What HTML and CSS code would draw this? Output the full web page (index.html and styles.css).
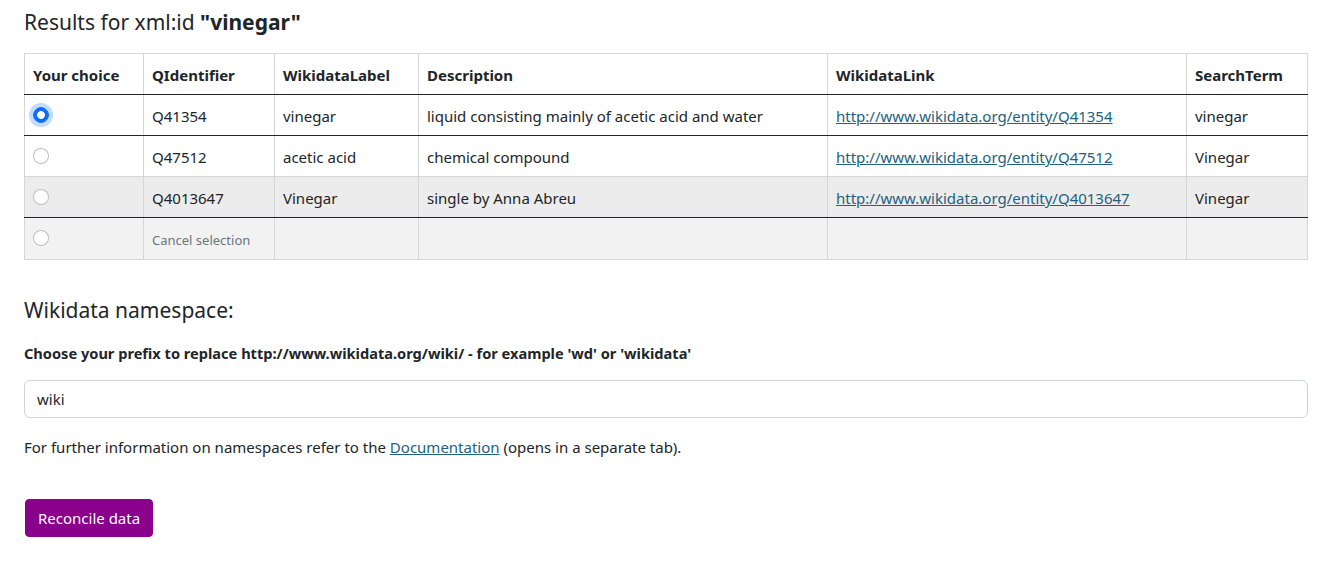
FILE: index.html
```html
<!DOCTYPE html>
<html lang="en">
<head>
<meta charset="utf-8">
<title>Results</title>
<link rel="stylesheet" href="styles.css">
</head>
<body>
<main class="page">
  <h4 class="title">Results for xml:id <strong>"vinegar"</strong></h4>
  <table class="results">
    <colgroup>
      <col class="c-choice"><col class="c-qid"><col class="c-label"><col class="c-desc"><col class="c-link"><col class="c-term">
    </colgroup>
    <thead>
      <tr class="dark-bottom">
        <th>Your choice</th><th>QIdentifier</th><th>WikidataLabel</th><th>Description</th><th>WikidataLink</th><th>SearchTerm</th>
      </tr>
    </thead>
    <tbody>
      <tr class="dark-bottom">
        <td><input type="radio" name="choice" class="radio" checked></td>
        <td>Q41354</td><td>vinegar</td><td>liquid consisting mainly of acetic acid and water</td>
        <td><a href="#">http://www.wikidata.org/entity/Q41354</a></td><td>vinegar</td>
      </tr>
      <tr>
        <td><input type="radio" name="choice" class="radio"></td>
        <td>Q47512</td><td>acetic acid</td><td>chemical compound</td>
        <td><a href="#">http://www.wikidata.org/entity/Q47512</a></td><td>Vinegar</td>
      </tr>
      <tr class="dark-bottom row-hover">
        <td><input type="radio" name="choice" class="radio"></td>
        <td>Q4013647</td><td>Vinegar</td><td>single by Anna Abreu</td>
        <td><a href="#">http://www.wikidata.org/entity/Q4013647</a></td><td>Vinegar</td>
      </tr>
      <tr class="row-cancel">
        <td><input type="radio" name="choice" class="radio"></td>
        <td><small class="muted">Cancel selection</small></td><td></td><td></td><td></td><td></td>
      </tr>
    </tbody>
  </table>

  <h5 class="subtitle">Wikidata namespace:</h5>
  <label class="form-label" for="prefix">Choose your prefix to replace http://www.wikidata.org/wiki/ - for example 'wd' or 'wikidata'</label>
  <input id="prefix" class="form-control" type="text" value="wiki">
  <p class="note">For further information on namespaces refer to the <a href="#">Documentation</a> (opens in a separate tab).</p>
  <button class="btn" type="button">Reconcile data</button>
</main>
</body>
</html>
```

FILE: styles.css
```css
html, body {
  margin: 0;
  padding: 0;
  background: #fff;
}
body {
  font-family: "Noto Sans", "Open Sans", sans-serif;
  font-size: 15px;
  line-height: 24px;
  color: #212529;
}
.page {
  padding: 0 17px 0 24px;
  display: flex;
  flex-direction: column;
  align-items: stretch;
}
.title {
  font-size: 21px;
  font-weight: 400;
  line-height: 28px;
  margin: 8px 0 17px;
}
.title strong { font-weight: 700; }

.results {
  width: 100%;
  table-layout: fixed;
  border-collapse: collapse;
  border: 1px solid #d6d6d6;
}
.c-choice { width: 119px; }
.c-qid { width: 131px; }
.c-label { width: 144px; }
.c-desc { width: 409px; }
.c-link { width: 359px; }
.c-term { width: 121px; }

.results th, .results td {
  padding: 8px;
  text-align: left;
  vertical-align: top;
  border-right: 1px solid #d6d6d6;
  border-bottom: 1px solid #d6d6d6;
  white-space: nowrap;
  height: 24px;
}
.results td { padding-top: 9px; padding-bottom: 7px; }
.results th { font-weight: 700; padding-top: 9px; padding-bottom: 7px; }
.results tr.dark-bottom > th,
.results tr.dark-bottom > td { border-bottom: 1px solid #212529; }
.row-hover > td { background: #ececec; }
.row-cancel > td { background: #f2f2f2; }

.radio {
  -webkit-appearance: none;
  appearance: none;
  box-sizing: border-box;
  width: 16px;
  height: 16px;
  margin: 3px 0 0 0;
  vertical-align: top;
  border: 1px solid rgba(0,0,0,.25);
  border-radius: 50%;
  background: #fff;
}
.radio:checked {
  background: radial-gradient(circle, #fff 0 3.6px, #0d6efd 4.2px);
  border-color: #0d6efd;
  box-shadow: 0 0 0 4px rgba(13,110,253,.25);
}

a { color: #22627f; text-decoration: underline; }
.muted { color: #6c757d; font-size: 13px; }

.subtitle {
  font-size: 21px;
  font-weight: 400;
  line-height: 24px;
  margin: 38px 0 19px;
}
.form-label {
  display: block;
  font-weight: 700;
  font-size: 14.6px;
  line-height: 24px;
  margin-bottom: 15px;
}
.form-control {
  box-sizing: border-box;
  width: 100%;
  height: 38px;
  padding: 6px 12px;
  font: inherit;
  color: #212529;
  border: 1px solid #ced4da;
  border-radius: 6px;
  margin: 0;
}
.note {
  margin: 17px 0 40px;
  font-size: 15px;
}
.btn {
  align-self: flex-start;
  margin-left: 1px;
  height: 38px;
  padding: 6px 12px;
  font: inherit;
  color: #fff;
  background: #8b008b;
  border: 1px solid #8b008b;
  border-radius: 4px;
}
```
